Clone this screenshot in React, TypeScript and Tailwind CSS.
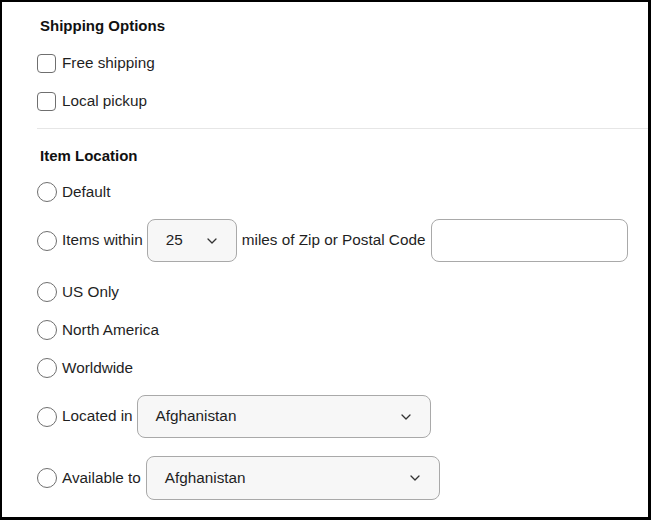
import React from "react";

const Chevron = () => (
  <svg width="10" height="6" viewBox="0 0 10 6" fill="none" className="shrink-0">
    <path d="M1 1l4 4 4-4" stroke="#333" strokeWidth="1.3" strokeLinecap="round" strokeLinejoin="round" />
  </svg>
);

const Checkbox = ({ label }: { label: string }) => (
  <label className="flex h-[38px] items-center gap-[6px]">
    <span className="h-[19px] w-[19px] shrink-0 rounded-[4px] border border-[#6f6f6f] bg-white" />
    <span>{label}</span>
  </label>
);

const Radio = ({ children, className = "h-[38px]" }: { children: React.ReactNode; className?: string }) => (
  <label className={`flex items-center gap-[5px] ${className}`}>
    <span className="h-[20px] w-[20px] shrink-0 rounded-full border border-[#6f6f6f] bg-white" />
    {children}
  </label>
);

const Select = ({ value, width, height = "h-[43px]" }: { value: string; width: string; height?: string }) => (
  <div
    className={`-ml-[1px] flex items-center justify-between rounded-[8px] border border-[#a9a9a9] bg-[#f7f7f7] pl-[18px] pr-[19px] ${width} ${height}`}
  >
    <span>{value}</span>
    <Chevron />
  </div>
);

export default function App() {
  return (
    <div
      className="h-[520px] w-[651px] border-t-2 border-l-2 border-r-[3px] border-b-[3px] border-black bg-white text-[15.3px] text-[#1f1f1f]"
      style={{ fontFamily: '"Liberation Sans", Arial, sans-serif' }}
    >
      <div className="flex flex-col pl-[35px] pt-[12px]">
        <div className="flex h-[24px] items-center pl-[3px] text-[15px] font-bold text-[#111]">Shipping Options</div>
        <div className="mt-[6px] flex flex-col">
          <Checkbox label="Free shipping" />
          <Checkbox label="Local pickup" />
        </div>
        <div className="mt-[8px] h-px bg-[#e6e6e6]" />
        <div className="mt-[15px] flex h-[24px] items-center pl-[3px] text-[15px] font-bold text-[#111]">Item Location</div>
        <div className="mt-[5px] flex flex-col">
          <Radio>
            <span>Default</span>
          </Radio>
          <Radio className="mt-[8px] h-[43px]">
            <span>Items within</span>
            <Select value="25" width="w-[90px]" />
            <span>miles of Zip or Postal Code</span>
            <div className="ml-[1px] h-[43px] w-[197px] rounded-[8px] border border-[#a9a9a9] bg-white" />
          </Radio>
          <Radio className="mt-[11px] h-[38px]">
            <span>US Only</span>
          </Radio>
          <Radio>
            <span>North America</span>
          </Radio>
          <Radio>
            <span>Worldwide</span>
          </Radio>
          <Radio className="mt-[8px] h-[43px]">
            <span>Located in</span>
            <Select value="Afghanistan" width="w-[294px]" />
          </Radio>
          <Radio className="mt-[18px] h-[44px]">
            <span className="pr-[1px]">Available to</span>
            <Select value="Afghanistan" width="w-[294px]" height="h-[44px]" />
          </Radio>
        </div>
      </div>
    </div>
  );
}
